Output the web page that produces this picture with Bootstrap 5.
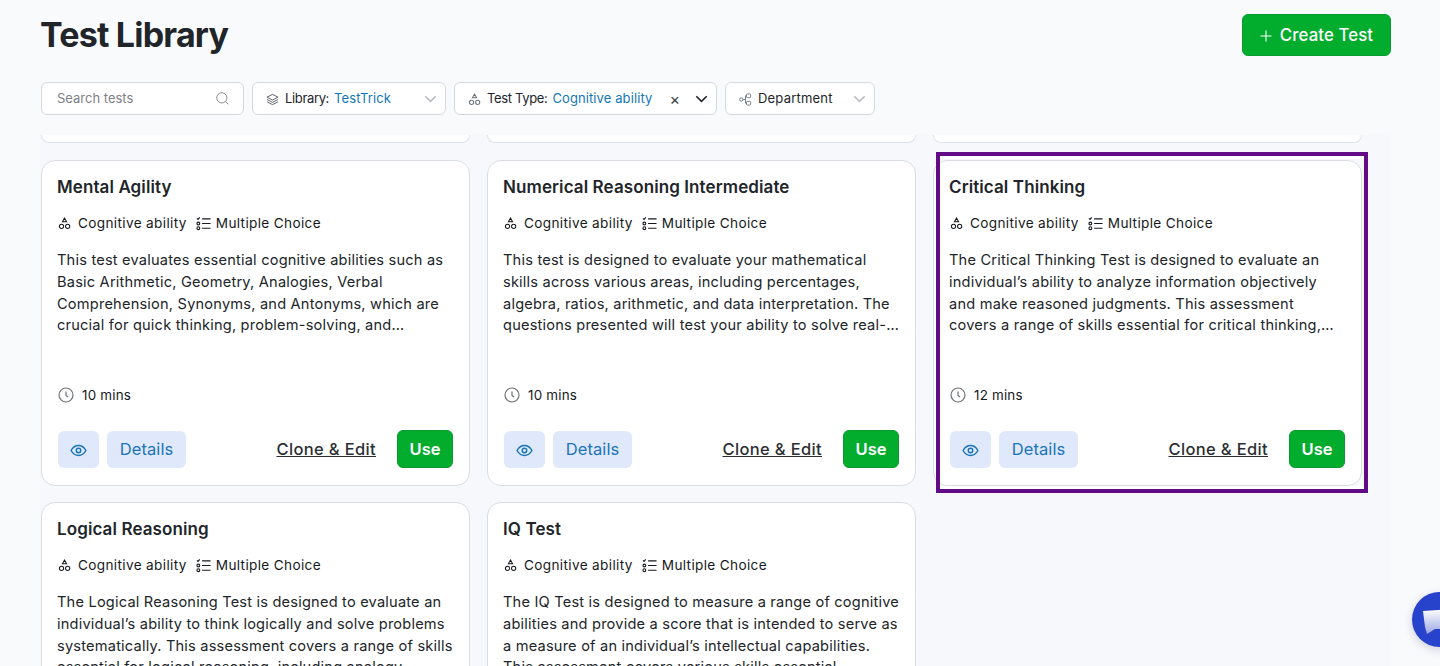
<!DOCTYPE html>
<html lang="en">

<head>
    <meta charset="UTF-8">
    <meta name="viewport" content="width=device-width, initial-scale=1.0">
    <title>Test Library</title>
    <link href="https://cdn.jsdelivr.net/npm/bootstrap@5.3.0/dist/css/bootstrap.min.css" rel="stylesheet">
    <script defer src="https://cdn.jsdelivr.net/npm/bootstrap@5.3.0/dist/js/bootstrap.bundle.min.js"></script>
    <style>
        html, body { height: 666px; overflow: hidden; }
        body { background: #f9fafc; font-family: "Inter", "Liberation Sans", sans-serif; color: #212529; font-size: 14px; }
        .page { padding: 14px 49px 0 41px; height: 666px; overflow: hidden; }
        .page-title { font-size: 34px; font-weight: 700; letter-spacing: -.8px; line-height: 42px; margin: 0 0 0 -1px; }
        .btn-create { background: #02ac2c; color: #fff; border: 1px solid #0a9a30; border-radius: 6px; height: 42px; width: 149px; font-size: 16.8px; font-weight: 500; letter-spacing: .1px; padding: 1px 0 0; }
        .btn-create:hover { background: #02ac2c; color: #fff; }
        .filters { margin-top: 26px; height: 33px; }
        .filter { height: 33px; background: #fff; border: 1px solid #d5d9df; border-radius: 6px; font-size: 13px; padding: 1px 8px 0 13px; }
        .filter-search { width: 203px; padding: 0 14px 0 15px; color: #7d8186; }
        .filter-library { width: 194px; }
        .filter-type { width: 263px; }
        .filter-dept { width: 150px; letter-spacing: .2px; }
        .filter .f-icon { margin-right: 6px; }
        .filter .label { letter-spacing: -.35px; }
        .filter .value { color: #1277b8; margin-left: 5px; letter-spacing: .1px; }
        .filter .clear { margin: 0 15px 0 auto; font-size: 16px; line-height: 1; color: #3a3f44; }
        .filter .chev-off { color: #b9bdc2; }
        .cards { margin: 20px 0 0 -1px; padding-left: 1px; width: 1351px; height: 531px; overflow: hidden; background: #f7f8fb; display: grid; grid-template-columns: repeat(3, 429px); column-gap: 17px; row-gap: 16px; align-content: start; }
        .stub { height: 8px; margin-bottom: 1px; background: #fff; border: 1px solid #dfe2e7; border-top: 0; border-radius: 0 0 14px 14px; }
        .test-card { position: relative; height: 326px; background: #fff; border: 1px solid #dadde2; border-radius: 14px; padding: 15px 16px 16px; }
        .test-card h5 { font-size: 17px; font-weight: 600; letter-spacing: .1px; line-height: 22px; margin: 0 0 0 -1px; }
        .highlight { position: absolute; top: -9px; left: 2px; right: -7px; bottom: -8px; border: 4.5px solid #610c86; box-shadow: inset 0 3px #fff, inset 0 -3px #fff; pointer-events: none; }
        .meta { margin: 15px 0 0 0; font-size: 13.6px; font-weight: 400; letter-spacing: .35px; line-height: 20px; white-space: nowrap; color: #16191c; }
        .meta .i-type { margin: 0 7px 0 0; }
        .meta .i-format { margin: 0 5px 0 9px; }
        .desc { margin: 17px -2px 0 -1px; font-size: 14.6px; letter-spacing: .2px; line-height: 21.8px; height: 87px; overflow: hidden; }
        .mins { margin-top: 48px; font-size: 13.4px; font-weight: 400; letter-spacing: .2px; line-height: 20px; color: #16191c; }
        .actions { margin-top: 25px; }
        .btn-soft { background: #e0e9fb; color: #1a74b8; border: 0; border-radius: 6px; height: 37px; font-size: 16.5px; letter-spacing: .1px; padding: 0; }
        .btn-soft:hover { background: #e0e9fb; color: #1a74b8; }
        .btn-eye { width: 41px; }
        .btn-details { width: 79px; }
        .clone { color: #2b2f33; font-size: 16.5px; font-weight: 500; letter-spacing: .35px; margin: 0 13px 0 auto; }
        .btn-use { background: #02ac2c; color: #fff; border: 1px solid #0a9a30; border-radius: 6px; width: 56px; height: 38px; font-size: 16.5px; font-weight: 600; padding: 0; }
        .btn-use:hover { background: #02ac2c; color: #fff; }
        .chat-bubble { position: fixed; left: 1412px; top: 592px; width: 55px; height: 55px; border-radius: 50%; background: #2743cb; box-shadow: 0 3px 10px rgba(40, 50, 120, .2); }
        .chat-bubble svg { position: absolute; left: 11px; top: 17px; }
    </style>
</head>

<body>
    <svg width="0" height="0" class="position-absolute">
        <symbol id="i-shapes" viewBox="0 0 14 14" fill="none" stroke="currentColor" stroke-width="1.1">
            <path d="M7 1.200 9.200 5H4.800Z" /><circle cx="3.800" cy="10" r="2.300" /><circle cx="10.400" cy="10" r="2.300" />
        </symbol>
        <symbol id="i-list" viewBox="0 0 16 16" fill="none" stroke="currentColor" stroke-width="1.2">
            <path d="M1 2.500 2.200 3.700 4 1.500" /><circle cx="2.500" cy="8" r="1.500" /><circle cx="2.500" cy="13" r="1.500" /><path d="M6.500 3h9M6.500 8h9M6.500 13h9" />
        </symbol>
        <symbol id="i-clock" viewBox="0 0 16 16" fill="none" stroke="#6f7479" stroke-width="1.200">
            <circle cx="8" cy="8" r="7" /><path d="M8 4.500V8.400L10 10" />
        </symbol>
        <symbol id="i-eye" viewBox="0 0 18 14" fill="none" stroke="currentColor" stroke-width="1.600">
            <path d="M1 7C3 3.400 5.800 1.600 9 1.600S15 3.400 17 7C15 10.600 12.200 12.400 9 12.400S3 10.600 1 7Z" /><circle cx="9" cy="7" r="2.400" />
        </symbol>
        <symbol id="i-chev" viewBox="0 0 16 10" fill="none" stroke="currentColor" stroke-width="2">
            <path d="M1.500 1.500 8 8l6.500-6.500" />
        </symbol>
    </svg>

    <div class="page">
        <div class="d-flex justify-content-between align-items-center">
            <h1 class="page-title">Test Library</h1>
            <button class="btn btn-create d-flex align-items-center justify-content-center gap-2">
                <svg width="12" height="12" viewBox="0 0 12 12" stroke="currentColor" stroke-width="1.100"><path d="M6 .5v11M.5 6h11" /></svg>
                Create Test
            </button>
        </div>

        <div class="filters d-flex gap-2">
            <div class="filter filter-search d-flex align-items-center justify-content-between">
                <span>Search tests</span>
                <svg width="13" height="13" viewBox="0 0 14 14" fill="none" stroke="#80858a" stroke-width="1"><circle cx="6.300" cy="6.300" r="5.500" /><path d="m10.300 10.300 3 3" /></svg>
            </div>
            <div class="filter filter-library d-flex align-items-center">
                <svg class="f-icon" width="13" height="13" viewBox="0 0 14 14" fill="none" stroke="#555a60" stroke-width="1"><path d="M7 1.500 13 4.500 7 7.500 1 4.500ZM1 7l6 3 6-3M1 9.500l6 3 6-3" /></svg>
                <span class="label">Library:</span><span class="value">TestTrick</span>
                <svg class="ms-auto chev-off" width="13" height="8"><use href="#i-chev" /></svg>
            </div>
            <div class="filter filter-type d-flex align-items-center">
                <svg class="f-icon text-secondary" width="13" height="13"><use href="#i-shapes" /></svg>
                <span class="label">Test Type:</span><span class="value">Cognitive ability</span>
                <span class="clear">×</span>
                <svg width="13" height="8" class="text-dark"><use href="#i-chev" /></svg>
            </div>
            <div class="filter filter-dept d-flex align-items-center">
                <svg class="f-icon text-secondary" width="13" height="13" viewBox="0 0 14 14" fill="none" stroke="currentColor"><circle cx="2.500" cy="7" r="1.800" /><rect x="8" y="1" width="4.500" height="4" rx="1" /><rect x="8" y="9" width="4.500" height="4" rx="1" /><path d="M4.300 7H7V3h1M7 7v4h1" /></svg>
                <span>Department</span>
                <svg class="ms-auto chev-off" width="13" height="8"><use href="#i-chev" /></svg>
            </div>
        </div>

        <div class="cards" id="cards"></div>
    </div>

    <div class="chat-bubble">
        <svg width="34" height="26" viewBox="0 0 34 26"><defs><linearGradient id="g" x1="0" y1="0" x2="0" y2="1"><stop offset="0" stop-color="#fff" /><stop offset="1" stop-color="#9aa6e4" /></linearGradient></defs><path d="M0 2 30 0 34 20 12 20 4 25 2 18Z" fill="url(#g)" /></svg>
    </div>

    <script>
        // card data, top to bottom
        const tests = [
            { title: "Mental Agility", mins: 10, desc: "This test evaluates essential cognitive abilities such as Basic Arithmetic, Geometry, Analogies, Verbal Comprehension, Synonyms, and Antonyms, which are crucial for quick thinking, problem-solving, and…" },
            { title: "Numerical Reasoning Intermediate", mins: 10, desc: "This test is designed to evaluate your mathematical skills across various areas, including percentages, algebra, ratios, arithmetic, and data interpretation. The questions presented will test your ability to solve real-…" },
            { title: "Critical Thinking", mins: 12, selected: true, desc: "The Critical Thinking Test is designed to evaluate an individual’s ability to analyze information objectively and make reasoned judgments. This assessment<br>covers a range of skills essential for critical thinking,…" },
            { title: "Logical Reasoning", mins: 10, desc: "The Logical Reasoning Test is designed to evaluate an individual’s ability to think logically and solve problems systematically. This assessment covers a range of skills essential for logical reasoning, including analogy,…" },
            { title: "IQ Test", mins: 10, desc: "The IQ Test is designed to measure a range of cognitive abilities and provide a score that is intended to serve as a measure of an individual’s intellectual capabilities. This assessment covers various skills essential…" }
        ];

        let html = '<div class="stub"></div><div class="stub"></div><div class="stub"></div>';
        tests.forEach((t) => {
            html += `<div class="test-card">
                <h5>${t.title}</h5>
                <div class="meta d-flex align-items-center">
                    <svg class="i-type" width="13" height="13"><use href="#i-shapes" /></svg>Cognitive ability
                    <svg class="i-format" width="15" height="15"><use href="#i-list" /></svg>Multiple Choice
                </div>
                <p class="desc">${t.desc}</p>
                <div class="mins d-flex align-items-center gap-2"><svg width="16" height="16"><use href="#i-clock" /></svg>${t.mins} mins</div>
                <div class="actions d-flex align-items-center gap-2">
                    <button class="btn btn-soft btn-eye"><svg width="17" height="13"><use href="#i-eye" /></svg></button>
                    <button class="btn btn-soft btn-details">Details</button>
                    <a href="#" class="clone">Clone &amp; Edit</a>
                    <button class="btn btn-use">Use</button>
                </div>
                ${t.selected ? '<div class="highlight"></div>' : ''}
            </div>`;
        });
        document.getElementById("cards").innerHTML = html;
    </script>
</body>

</html>
